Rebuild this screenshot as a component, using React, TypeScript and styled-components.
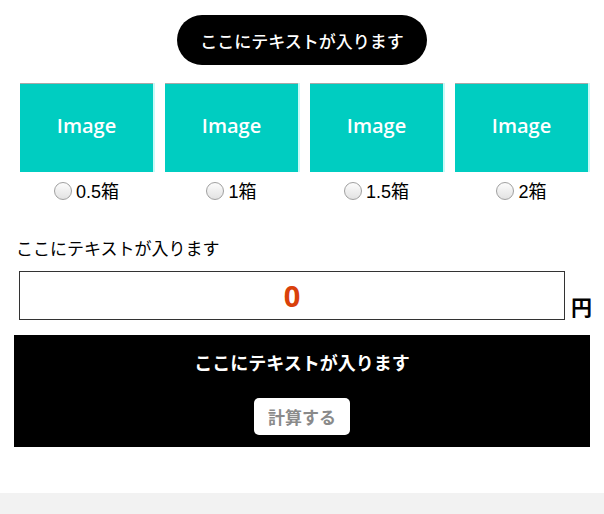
import styled, { createGlobalStyle } from "styled-components";

const GlobalStyle = createGlobalStyle`
  html, body {
    margin: 0;
    padding: 0;
    background: #fff;
  }
  body {
    font-family: "Noto Sans CJK JP", "Noto Sans", sans-serif;
    color: #000;
  }
`;

const options = ["0.5箱", "1箱", "1.5箱", "2箱"];

export default function App() {
  return (
    <>
      <GlobalStyle />
      <Page>
        <Head>
          <PillTitle>ここにテキストが入ります</PillTitle>
        </Head>
        <Choices>
          {options.map((label) => (
            <Choice key={label}>
              <ImageBox>Image</ImageBox>
              <RadioLabel>
                <HiddenRadio type="radio" name="box" />
                <RadioMark />
                {label}
              </RadioLabel>
            </Choice>
          ))}
        </Choices>
        <Caption>ここにテキストが入ります</Caption>
        <PriceRow>
          <PriceBox>0</PriceBox>
          <Yen>円</Yen>
        </PriceRow>
        <CalcPanel>
          <CalcTitle>ここにテキストが入ります</CalcTitle>
          <CalcButton>計算する</CalcButton>
        </CalcPanel>
      </Page>
      <Footer />
    </>
  );
}

const Page = styled.div`
  padding: 15px 14px 46px 14px;
`;

const Head = styled.div`
  display: flex;
  justify-content: center;
`;

const PillTitle = styled.div`
  width: 250px;
  height: 50px;
  border-radius: 25px;
  background: #000;
  color: #fff;
  font-size: 17px;
  font-weight: 500;
  display: flex;
  align-items: center;
  justify-content: center;
`;

const Choices = styled.div`
  display: grid;
  grid-template-columns: repeat(4, 133px);
  column-gap: 12px;
  padding: 18px 0 0 6px;
`;

const Choice = styled.div`
  display: flex;
  flex-direction: column;
  align-items: center;
`;

const ImageBox = styled.div`
  width: 133px;
  height: 89px;
  box-sizing: border-box;
  background: #00cdc1;
  border-top: 1px solid #a8a8a8;
  box-shadow: 2px 0 0 #c8faf7;
  color: #fff;
  font-family: "Open Sans", sans-serif;
  font-weight: 600;
  font-size: 20px;
  padding-bottom: 5px;
  display: flex;
  align-items: center;
  justify-content: center;
`;

const RadioLabel = styled.label`
  display: flex;
  align-items: center;
  gap: 4px;
  margin-top: 9px;
  font-family: "Liberation Sans", "Noto Sans CJK JP", sans-serif;
  font-size: 18px;
  line-height: 22px;
  cursor: pointer;
`;

const HiddenRadio = styled.input`
  position: absolute;
  opacity: 0;
  width: 0;
  height: 0;
  margin: 0;
`;

const RadioMark = styled.span`
  flex-shrink: 0;
  width: 18px;
  height: 18px;
  border-radius: 50%;
  border: 1px solid #a0a0a0;
  background: linear-gradient(#fcfcfc, #e2e2e2);
  box-sizing: border-box;
  margin-top: -3px;
`;

const Caption = styled.div`
  margin: 33px 0 0 2px;
  font-size: 17px;
  line-height: 24px;
`;

const PriceRow = styled.div`
  display: flex;
  align-items: flex-end;
  gap: 6px;
  margin: 11px 0 0 5px;
`;

const PriceBox = styled.div`
  flex-shrink: 0;
  width: 546px;
  height: 49px;
  box-sizing: border-box;
  border: 1px solid #333;
  color: #d9410a;
  font-family: "Noto Sans", sans-serif;
  font-weight: 700;
  font-size: 29px;
  line-height: 1;
  display: flex;
  align-items: center;
  justify-content: center;
`;

const Yen = styled.div`
  flex-shrink: 0;
  font-size: 21px;
  font-weight: 700;
  line-height: 26px;
  margin-bottom: 1px;
`;

const CalcPanel = styled.div`
  margin-top: 15px;
  width: 576px;
  height: 112px;
  background: #000;
  display: flex;
  flex-direction: column;
  align-items: center;
  padding-top: 14px;
  box-sizing: border-box;
`;

const CalcTitle = styled.div`
  color: #fff;
  font-size: 18px;
  font-weight: 700;
  line-height: 26px;
`;

const CalcButton = styled.button`
  margin-top: 23px;
  width: 96px;
  height: 37px;
  border: none;
  border-radius: 5px;
  background: #fff;
  color: #8a8a8a;
  font-family: "Noto Sans CJK JP", sans-serif;
  font-size: 17px;
  font-weight: 700;
  padding: 0;
`;

const Footer = styled.div`
  height: 22px;
  background: #f2f2f2;
`;
